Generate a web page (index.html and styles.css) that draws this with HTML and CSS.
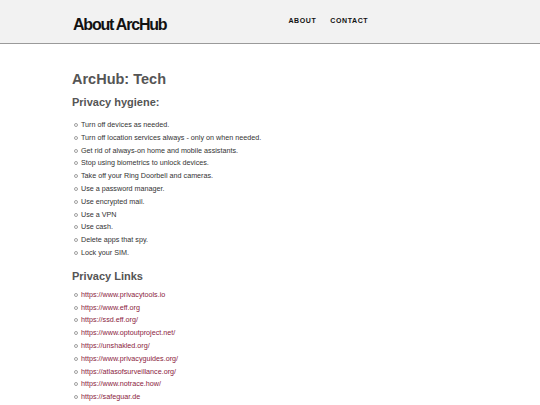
FILE: index.html
```
<!DOCTYPE html>
<html>
<head>
<meta charset="utf-8">
<link rel="stylesheet" href="styles.css">
</head>
<body>
<header class="site-header">
  <div class="header-inner">
    <div class="site-title">About ArcHub</div>
    <nav class="nav">
      <a href="#">ABOUT</a>
      <a href="#">CONTACT</a>
    </nav>
  </div>
</header>
<main class="content">
  <h1>ArcHub: Tech</h1>
  <h2 class="h-first">Privacy hygiene:</h2>
  <ul class="list list-first">
    <li>Turn off devices as needed.</li>
    <li>Turn off location services always - only on when needed.</li>
    <li>Get rid of always-on home and mobile assistants.</li>
    <li>Stop using biometrics to unlock devices.</li>
    <li>Take off your Ring Doorbell and cameras.</li>
    <li>Use a password manager.</li>
    <li>Use encrypted mail.</li>
    <li>Use a VPN</li>
    <li>Use cash.</li>
    <li>Delete apps that spy.</li>
    <li>Lock your SIM.</li>
  </ul>
  <h2 class="h-second">Privacy Links</h2>
  <ul class="list links">
    <li><a href="#">https://www.privacytools.io</a></li>
    <li><a href="#">https://www.eff.org</a></li>
    <li><a href="#">https://ssd.eff.org/</a></li>
    <li><a href="#">https://www.optoutproject.net/</a></li>
    <li><a href="#">https://unshakled.org/</a></li>
    <li><a href="#">https://www.privacyguides.org/</a></li>
    <li><a href="#">https://atlasofsurveillance.org/</a></li>
    <li><a href="#">https://www.notrace.how/</a></li>
    <li><a href="#">https://safeguar.de</a></li>
  </ul>
</main>
</body>
</html>
```
FILE: styles.css
```
html, body {
  margin: 0;
  padding: 0;
  background: #ffffff;
  font-family: "Liberation Sans", Arial, sans-serif;
}
.site-header {
  background: #f2f2f2;
  border-bottom: 1px solid #9a9a9a;
  height: 44px;
  box-sizing: border-box;
}
.header-inner {
  display: flex;
  align-items: flex-start;
  padding-left: 73px;
}
.site-title {
  font-size: 16px;
  line-height: 18px;
  font-weight: bold;
  color: #111111;
  letter-spacing: -1.2px;
  margin-top: 16px;
}
.nav {
  display: flex;
  gap: 14px;
  margin-left: 122px;
  margin-top: 15.5px;
}
.nav a {
  font-size: 7px;
  line-height: 9px;
  font-weight: bold;
  letter-spacing: 0.6px;
  color: #111111;
  text-decoration: none;
}
.content {
  padding: 0 72px;
}
h1 {
  font-size: 14.5px;
  line-height: 18px;
  font-weight: bold;
  margin: 26px 0 0;
  color: #555555;
}
h2 {
  font-size: 11px;
  line-height: 14px;
  font-weight: bold;
  color: #555555;
  margin: 0;
}
.h-first {
  margin-top: 7px;
}
.h-second {
  margin-top: 9px;
}
.list {
  list-style: none;
  margin: 0;
  padding: 0;
  font-size: 7.2px;
  line-height: 12.8px;
  color: #333333;
}
.list-first {
  margin-top: 10px;
}
.links {
  margin-top: 6px;
}
.list li {
  position: relative;
  padding-left: 9px;
}
.list li::before {
  content: "";
  position: absolute;
  left: 1.8px;
  top: 4px;
  width: 2px;
  height: 2px;
  border: 0.5px solid #a0a0a0;
  border-radius: 50%;
}
.links a {
  color: #8b1c40;
  text-decoration: none;
}
```
